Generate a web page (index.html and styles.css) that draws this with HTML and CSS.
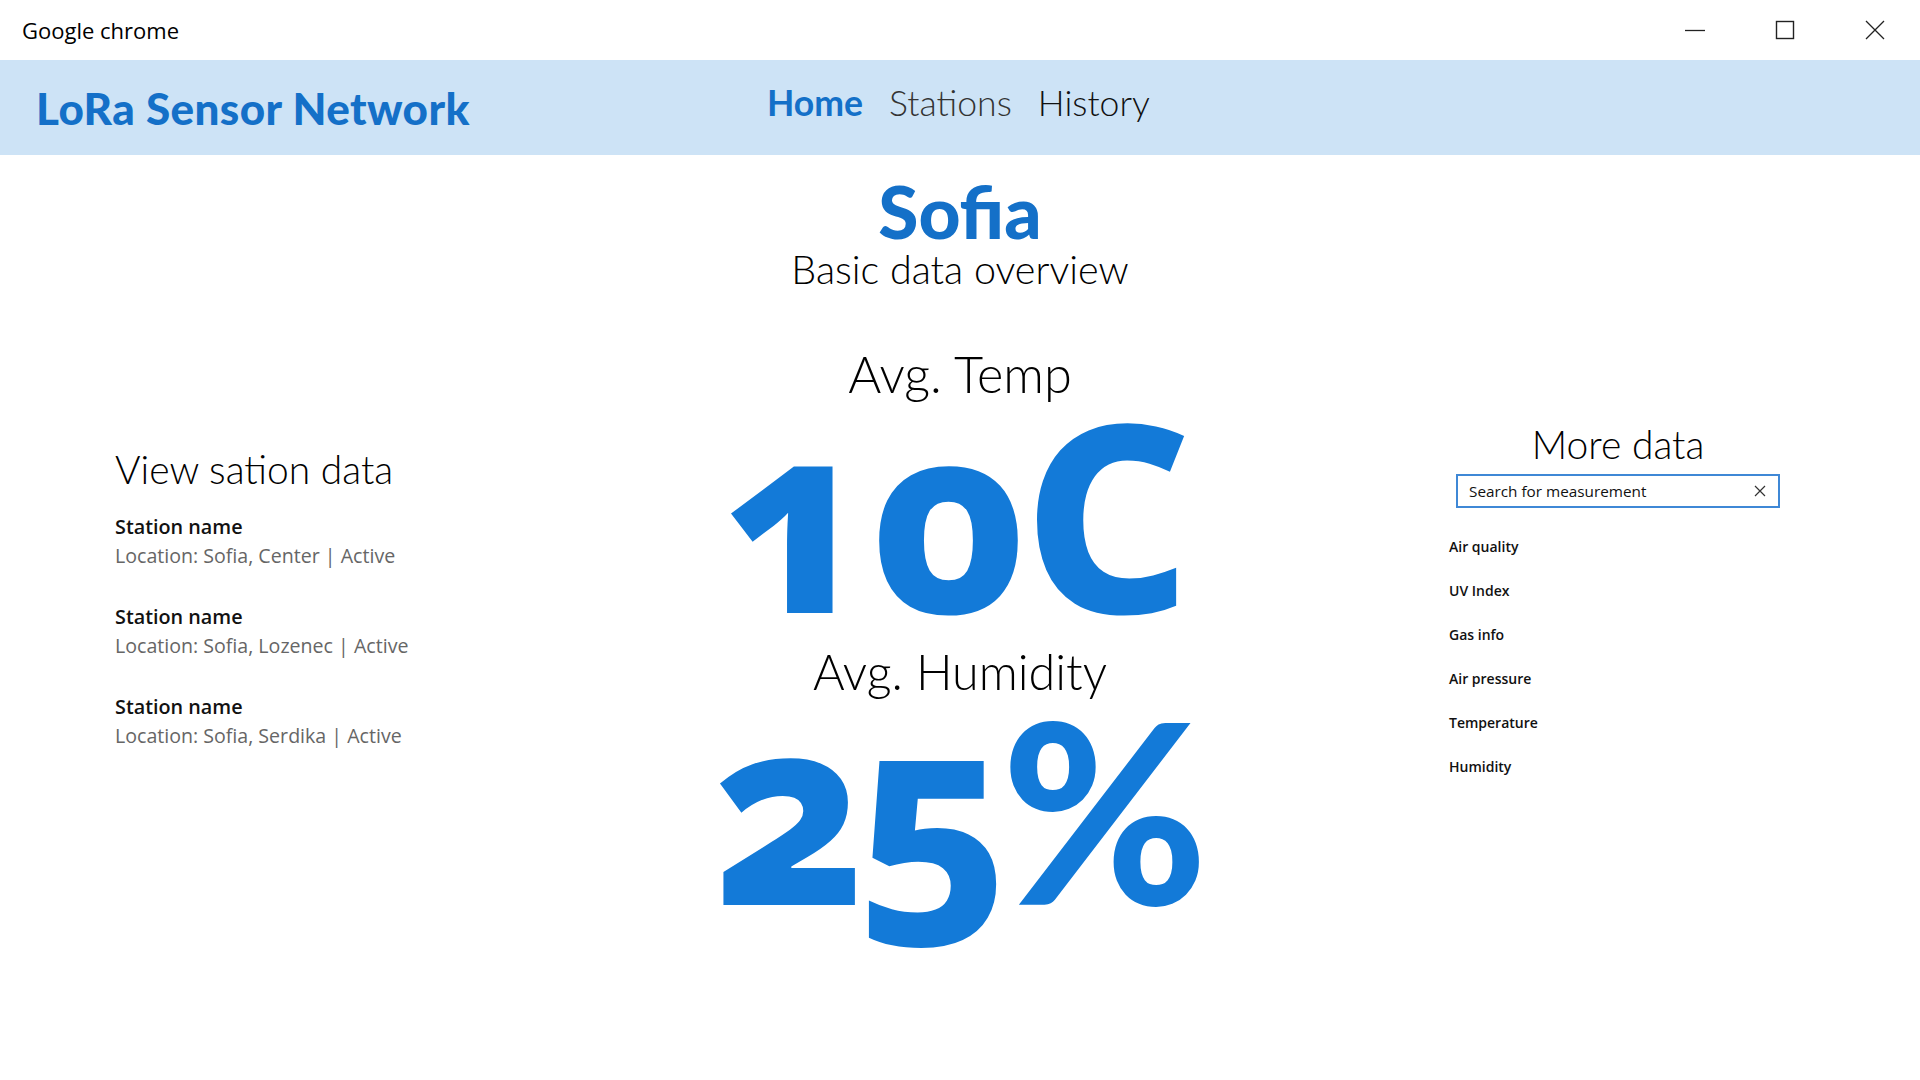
FILE: index.html
```html
<!DOCTYPE html>
<html lang="en">
<head>
<meta charset="utf-8">
<title>LoRa Sensor Network</title>
<link rel="stylesheet" href="styles.css">
</head>
<body>
<div class="titlebar">
  <span class="app-title">Google chrome</span>
  <div class="win-controls">
    <span class="win-btn"><svg width="20" height="20" viewBox="0 0 20 20"><line x1="0" y1="10.5" x2="20" y2="10.5" stroke="#222" stroke-width="1.3"/></svg></span>
    <span class="win-btn"><svg width="20" height="20" viewBox="0 0 20 20"><rect x="1.5" y="1.5" width="17" height="17" fill="none" stroke="#222" stroke-width="1.4"/></svg></span>
    <span class="win-btn"><svg width="20" height="20" viewBox="0 0 20 20"><path d="M1 1 L19 19 M19 1 L1 19" stroke="#222" stroke-width="1.3"/></svg></span>
  </div>
</div>
<header class="header">
  <div class="logo">LoRa Sensor Network</div>
  <nav class="nav">
    <a class="nav-item active">Home</a>
    <a class="nav-item muted">Stations</a>
    <a class="nav-item">History</a>
  </nav>
</header>
<main class="main">
  <section class="col-left">
    <h2 class="section-title">View sation data</h2>
    <ul class="stations">
      <li class="station"><div class="st-name">Station name</div><div class="st-loc">Location: Sofia, Center | Active</div></li>
      <li class="station"><div class="st-name">Station name</div><div class="st-loc">Location: Sofia, Lozenec | Active</div></li>
      <li class="station"><div class="st-name">Station name</div><div class="st-loc">Location: Sofia, Serdika | Active</div></li>
    </ul>
  </section>
  <section class="col-center">
    <h1 class="city">Sofia</h1>
    <div class="subtitle">Basic data overview</div>
    <div class="metric-label temp-label">Avg. Temp</div>
    <div class="metric-value temp-value">10C</div>
    <div class="metric-label hum-label">Avg. Humidity</div>
    <div class="metric-value hum-value">25<span class="pct">%</span></div>
  </section>
  <section class="col-right">
    <div class="right-inner">
      <h2 class="section-title more-title">More data</h2>
      <div class="search">
        <span class="search-text">Search for measurement</span>
        <svg class="search-x" width="12" height="12" viewBox="0 0 12 12"><path d="M1 1 L11 11 M11 1 L1 11" stroke="#333" stroke-width="1.2"/></svg>
      </div>
      <ul class="measures">
        <li>Air quality</li>
        <li>UV Index</li>
        <li>Gas info</li>
        <li>Air pressure</li>
        <li>Temperature</li>
        <li>Humidity</li>
      </ul>
    </div>
  </section>
</main>
</body>
</html>
```
FILE: styles.css
```css
* { box-sizing: border-box; }
html, body { margin: 0; padding: 0; background: #fff; }
body { font-family: "Open Sans", "Noto Sans", sans-serif; color: #000; width: 1920px; height: 1080px; overflow: hidden; }
ul { list-style: none; margin: 0; padding: 0; }
h1, h2 { margin: 0; font-weight: normal; }

.titlebar { height: 60px; display: flex; align-items: center; justify-content: space-between; padding-left: 22px; }
.app-title { font-family: "Open Sans", sans-serif; font-size: 22px; color: #000; }
.win-controls { display: flex; height: 100%; }
.win-btn { width: 90px; height: 60px; display: flex; align-items: center; justify-content: center; }

.header { height: 95px; background: #cde3f6; display: flex; align-items: center; padding-left: 36px; }
.logo { font-family: "Lato", sans-serif; font-weight: 900; font-size: 44px; color: #1470c8; width: 731px; letter-spacing: 0.4px; }
.nav { display: flex; gap: 26px; font-family: "Lato", sans-serif; font-size: 35.6px; font-weight: 300; margin-top: -10px; }
.nav-item { color: #111; }
.nav-item.active { color: #1470c8; font-weight: 700; }
.nav-item.muted { color: #333; }

.main { display: grid; grid-template-columns: 640px 640px 640px; }

.col-left { padding-left: 115px; padding-top: 292px; }
.section-title { font-family: "Lato", sans-serif; font-weight: 300; font-size: 39px; line-height: 44px; color: #000; }
.stations { margin-top: 21px; }
.station { margin-bottom: 32px; }
.st-name { font-family: "Open Sans", sans-serif; font-weight: 600; font-size: 19.8px; line-height: 29px; color: #111; }
.st-loc { font-family: "Open Sans", sans-serif; font-size: 19.6px; line-height: 29px; color: #666; }

.col-center { text-align: center; padding-top: 20px; }
.city { font-family: "Lato", sans-serif; font-weight: 900; font-size: 73px; line-height: 72px; color: #1470c8; }
.subtitle { font-family: "Lato", sans-serif; font-weight: 300; font-size: 39.5px; line-height: 44px; margin-top: 0; }
.metric-label { font-family: "Lato", sans-serif; font-weight: 300; font-size: 50.5px; line-height: 60px; }
.temp-label { margin-top: 53px; }
.metric-value { font-family: "Noto Sans", sans-serif; font-weight: 800; font-size: 262px; line-height: 230px; color: #137ad8; font-variant-numeric: oldstyle-nums; letter-spacing: -4px; }
.temp-value { margin-top: -7px; padding-right: 12px; }
.hum-label { margin-top: 14px; font-size: 48.5px; }
.hum-value { margin-top: -12px; letter-spacing: -12px; }
.pct { font-family: "Lato", sans-serif; font-weight: 900; font-size: 250px; letter-spacing: 0; margin-left: 2px; }

.col-right { padding-top: 267px; padding-left: 169px; }
.right-inner { width: 331px; }
.more-title { text-align: center; padding-left: 7px; }
.search { margin-left: 7px; margin-top: 8px; width: 324px; height: 34px; border: 2px solid #3f88d6; display: flex; align-items: center; justify-content: space-between; padding: 0 12px 0 11px; }
.search-text { font-family: "Open Sans", sans-serif; font-size: 15.3px; color: #111; }
.measures { margin-top: 17px; }
.measures li { font-family: "Open Sans", sans-serif; font-weight: 600; font-size: 14px; line-height: 44px; color: #111; }
```
